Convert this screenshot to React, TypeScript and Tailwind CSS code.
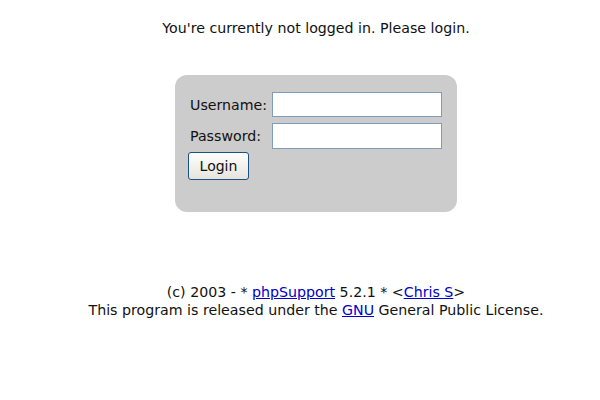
import React from "react";

export default function App() {
  return (
    <div className="min-h-[400px] bg-white pl-8 text-center text-[14.2px] leading-[18px] text-[#111111]" style={{ fontFamily: '"DejaVu Sans", Verdana, sans-serif' }}>
      <p className="pt-[19px]">You're currently not logged in. Please login.</p>

      <div className="mx-auto mt-[38px] h-[137px] w-[282px] rounded-[12px] bg-[#cccccc] pl-[13px] pt-[17px] text-left">
        <div className="flex items-center">
          <label className="w-[84px] pl-[2px]">Username:</label>
          <input type="text" className="h-[25px] w-[170px] border border-[#7f9db9] bg-white px-1 outline-none" />
        </div>
        <div className="mt-[6px] flex items-center">
          <label className="w-[84px] pl-[2px]">Password:</label>
          <input type="password" className="h-[26px] w-[170px] border border-[#7f9db9] bg-white px-1 outline-none" />
        </div>
        <button className="mt-[3px] h-[28px] w-[61px] rounded-[3px] border border-[#1c5180] bg-gradient-to-b from-white to-[#e6e4dc] text-[14px]">
          Login
        </button>
      </div>

      <div className="mt-[71px]">
        <p>
          (c) 2003 - * <a href="#" className="text-[#0000cc] underline">phpSupport</a> 5.2.1 * &lt;<a href="#" className="text-[#0000cc] underline">Chris S</a>&gt;
        </p>
        <p>
          This program is released under the <a href="#" className="text-[#0000cc] underline">GNU</a> General Public License.
        </p>
      </div>
    </div>
  );
}
